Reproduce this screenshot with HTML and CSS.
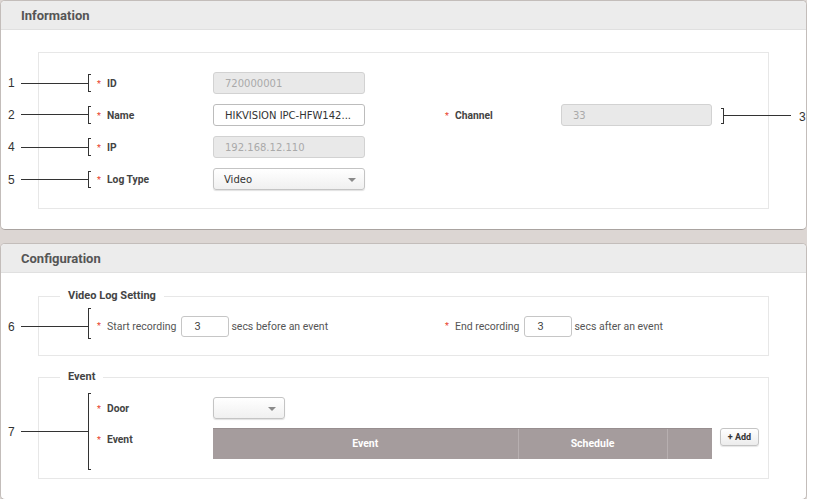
FILE: index.html
```html
<!DOCTYPE html>
<html>
<head>
<meta charset="utf-8">
<title>Device</title>
<link rel="stylesheet" href="styles.css">
</head>
<body>
<div class="page">
  <section class="panel">
    <header class="panel-head">Information</header>
    <div class="panel-body info-body">
      <div class="box">
        <div class="info-grid">
          <label class="label"><span class="req">*</span>ID</label>
          <div class="field disabled">720000001</div>

          <label class="label"><span class="req">*</span>Name</label>
          <div class="field">HIKVISION IPC-HFW142...</div>
          <label class="label col4"><span class="req">*</span>Channel</label>
          <div class="field disabled col5">33</div>

          <label class="label"><span class="req">*</span>IP</label>
          <div class="field disabled">192.168.12.110</div>

          <label class="label"><span class="req">*</span>Log Type</label>
          <div class="field select">Video</div>
        </div>
      </div>
    </div>
  </section>

  <section class="panel">
    <header class="panel-head">Configuration</header>
    <div class="panel-body config-body">
      <fieldset class="group group-video">
        <legend>Video Log Setting</legend>
        <div class="rec-row">
          <div class="rec-group rec-start">
            <span class="req">*</span><span class="rec-label">Start recording</span>
            <div class="sec-input">3</div>
            <span class="rec-label">secs before an event</span>
          </div>
          <div class="rec-group">
            <span class="req">*</span><span class="rec-label">End recording</span>
            <div class="sec-input">3</div>
            <span class="rec-label">secs after an event</span>
          </div>
        </div>
      </fieldset>

      <fieldset class="group group-event">
        <legend>Event</legend>
        <div class="event-grid">
          <label class="label"><span class="req">*</span>Door</label>
          <div class="field select door"></div>
          <label class="label event-label"><span class="req">*</span>Event</label>
          <div class="event-wrap">
            <table class="event-table">
              <thead>
                <tr><th class="th-event">Event</th><th class="th-schedule">Schedule</th><th></th></tr>
              </thead>
            </table>
            <button class="add-btn" type="button">+ Add</button>
          </div>
        </div>
      </fieldset>
    </div>
  </section>

  <div class="callouts">
    <svg width="813" height="499" viewBox="0 0 813 499" fill="none" stroke="#333" stroke-width="1" shape-rendering="crispEdges">
      <path d="M21 83.5H88.5M91 74.5H88.5V91.5H91"/>
      <path d="M21 114.5H88.5M91 106.5H88.5V123.5H91"/>
      <path d="M21 147.5H88.5M91 138.5H88.5V155.5H91"/>
      <path d="M21 179.5H88.5M91 171.5H88.5V187.5H91"/>
      <path d="M724 115.5H791M721 108.5H723.5V123.5H721"/>
      <path d="M21 326.5H88.5M91 308.5H88.5V338.5H91"/>
      <path d="M21 431.5H88.5M91 393.5H88.5V469.5H91"/>
    </svg>
    <span class="cn cn1">1</span>
    <span class="cn cn2">2</span>
    <span class="cn cn4">4</span>
    <span class="cn cn5">5</span>
    <span class="cn cn3">3</span>
    <span class="cn cn6">6</span>
    <span class="cn cn7">7</span>
  </div>
</div>
</body>
</html>
```

FILE: styles.css
```css
* {
  box-sizing: border-box;
}

html,
body {
  margin: 0;
  background: #ffffff;
}

body {
  font-family: Roboto, "Noto Sans", Arial, sans-serif;
  color: #444;
}

.page {
  position: relative;
  width: 807px;
  background: #dcd6d3;
}

/* ---------- panels ---------- */
.panel {
  background: #fff;
  border: 1px solid #c3bdba;
  border-bottom-color: #a9a3a0;
  border-radius: 5px;
  overflow: hidden;
}

.panel + .panel {
  margin-top: 13px;
}

.panel-head {
  height: 29px;
  background: #ececec;
  border-bottom: 1px solid #e0e0e0;
  padding: 2px 0 0 20px;
  font-size: 13px;
  font-weight: 700;
  line-height: 26px;
  color: #555;
}

.info-body {
  padding: 22px 37px 20px 37px;
}

.config-body {
  padding: 16px 37px 20px 37px;
}

.box {
  border: 1px solid #e7e7e7;
  padding: 19px 0 18px 56px;
}

/* ---------- info grid ---------- */
.info-grid {
  display: grid;
  grid-template-columns: 118px 152px 78px 118px 151px;
  grid-auto-rows: 22px;
  row-gap: 10px;
  align-items: center;
}

.info-grid .label {
  grid-column: 1;
}

.info-grid .field {
  grid-column: 2;
}

.info-grid .col4 {
  grid-column: 4;
}

.info-grid .col5 {
  grid-column: 5;
}

.label {
  display: flex;
  align-items: center;
  padding-top: 1px;
  font-size: 10.3px;
  font-weight: 700;
  line-height: 14px;
  color: #444;
}

.req {
  display: inline-block;
  width: 12px;
  padding-left: 2px;
  color: #e8412c;
  font-size: 9px;
  font-weight: 400;
  line-height: 14px;
}

.field {
  height: 22px;
  border: 1px solid #bcbcbc;
  border-radius: 3px;
  padding: 0 11px;
  background: #fff;
  font-family: "DejaVu Sans", Verdana, sans-serif;
  font-size: 10px;
  line-height: 21px;
  color: #333;
  white-space: nowrap;
  overflow: hidden;
}

.field.disabled {
  background: #e9e9e9;
  border-color: #d2d2d2;
  color: #a9a9a9;
}

.select {
  display: flex;
  align-items: center;
  padding: 1px 8px 0 10px;
  background: linear-gradient(#ffffff, #f0f0f0);
  border-color: #c4c4c4;
  box-shadow: 0 1px 1px rgba(0, 0, 0, 0.12);
}

.select::after {
  content: "";
  margin-left: auto;
  border-left: 4px solid transparent;
  border-right: 4px solid transparent;
  border-top: 4px solid #8a8a8a;
}

.door {
  width: 72px;
}

/* ---------- fieldsets ---------- */
.group {
  margin: 0;
  padding: 12px 0 18px 0;
  border: 1px solid #e7e7e7;
  min-width: 0;
}

.group + .group {
  margin-top: 14px;
}

.group-event {
  padding: 13px 0 19px 0;
}

.group legend {
  margin-left: 21px;
  padding: 0 8px;
  font-size: 11px;
  font-weight: 700;
  line-height: 14px;
  color: #444;
}

.rec-row {
  display: flex;
  align-items: center;
  height: 22px;
  padding-left: 56px;
}

.rec-group {
  display: flex;
  align-items: center;
}

.rec-start {
  width: 348px;
}

.rec-label {
  font-size: 10.5px;
  color: #555;
  white-space: nowrap;
}

.sec-input {
  width: 48px;
  height: 21px;
  margin: 0 2px 0 5px;
  border: 1px solid #c6c6c6;
  border-radius: 3px;
  padding-left: 12px;
  font-size: 11px;
  line-height: 19px;
  color: #444;
}

/* ---------- event ---------- */
.event-grid {
  display: grid;
  grid-template-columns: 118px auto;
  row-gap: 9px;
  padding-left: 56px;
  align-items: center;
}

.event-label {
  align-self: start;
  padding-top: 5px;
}

.event-wrap {
  display: flex;
  align-items: flex-start;
  gap: 8px;
}

.event-table {
  border-collapse: collapse;
  width: 499px;
}

.event-table th {
  height: 30px;
  padding: 0;
  background: #a59c9d;
  border-top: 1px solid #978e8f;
  border-left: 1px solid #b7afb0;
  color: #fff;
  font-size: 10.5px;
  font-weight: 700;
  text-align: center;
}

.event-table th:first-child {
  border-left: 0;
}

.th-event {
  width: 305px;
}

.th-schedule {
  width: 149px;
}

.add-btn {
  width: 39px;
  height: 18px;
  padding: 0;
  border: 1px solid #c4c4c4;
  border-radius: 3px;
  background: linear-gradient(#ffffff, #ececec);
  box-shadow: 0 1px 1px rgba(0, 0, 0, 0.1);
  font-family: Roboto, Arial, sans-serif;
  font-size: 9px;
  font-weight: 700;
  color: #333;
}

/* ---------- callouts overlay ---------- */
.callouts {
  position: absolute;
  left: 0;
  top: 0;
  width: 813px;
  height: 499px;
  pointer-events: none;
}

.callouts svg {
  position: absolute;
  left: 0;
  top: 0;
}

.cn {
  position: absolute;
  left: 8px;
  font-family: "Liberation Sans", Arial, sans-serif;
  font-size: 12px;
  line-height: 12px;
  color: #333;
}

.cn1 { top: 77px; }
.cn2 { top: 109px; }
.cn4 { top: 141px; }
.cn5 { top: 174px; }
.cn6 { top: 321px; }
.cn7 { top: 426px; }
.cn3 { top: 111px; left: 799px; }
```
